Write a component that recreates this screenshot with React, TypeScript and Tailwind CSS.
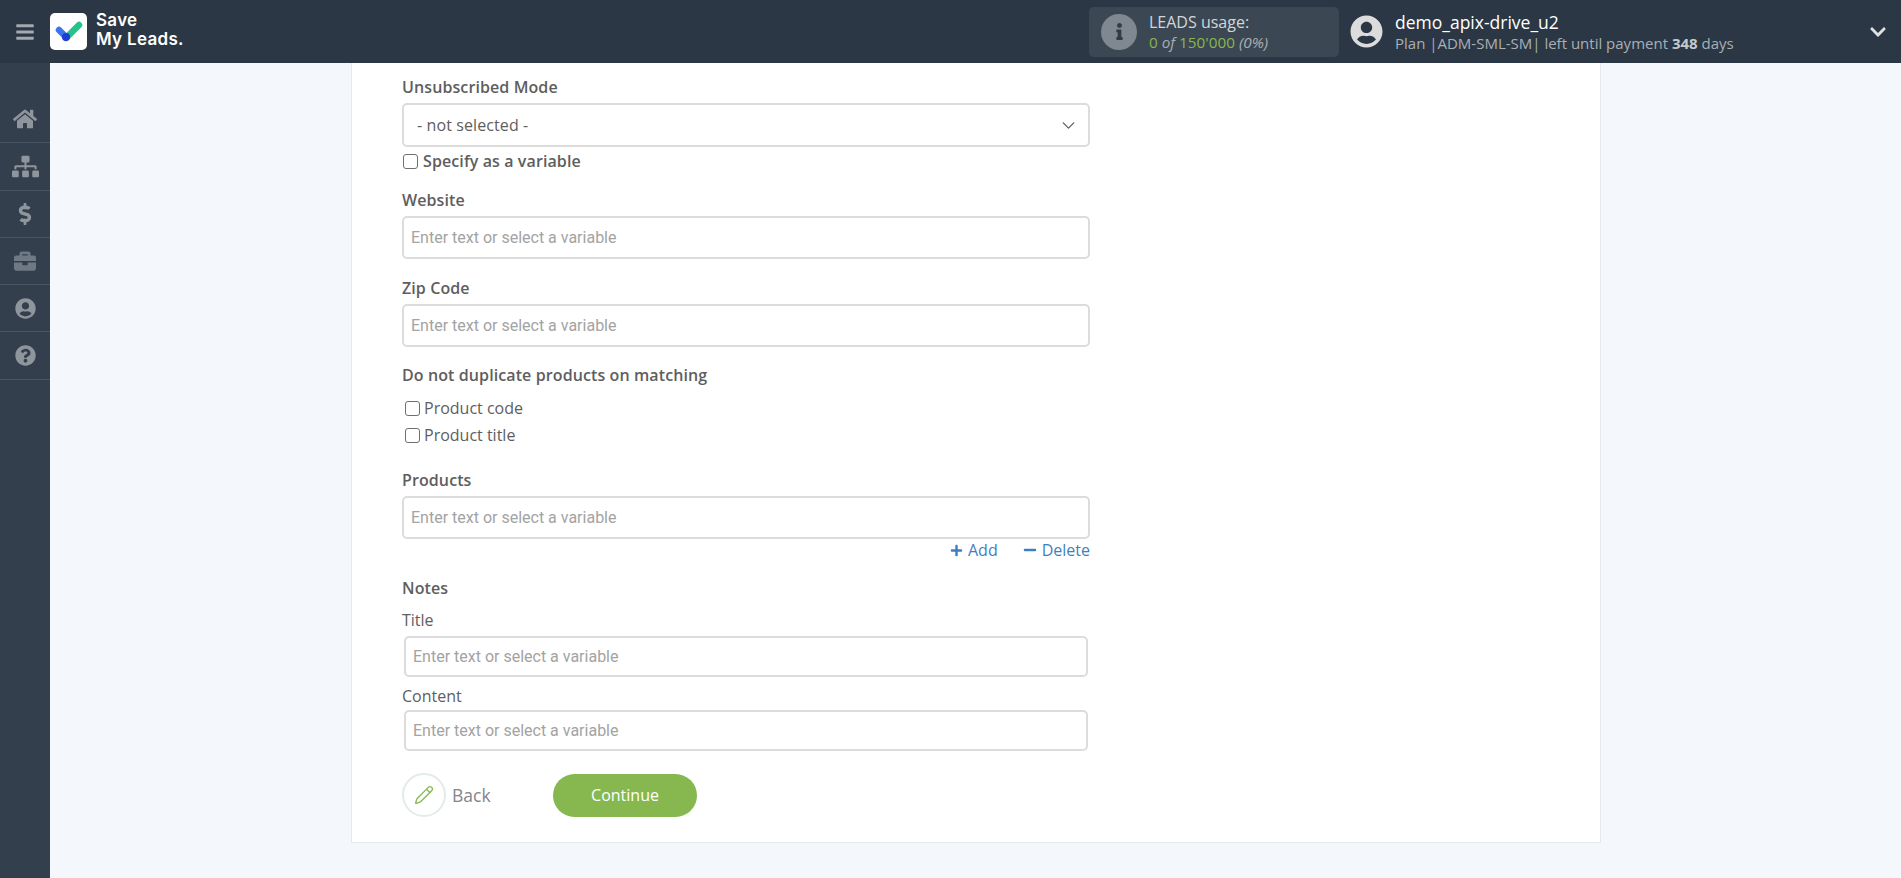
import { ReactNode } from 'react';
import {
  FaBars,
  FaBriefcase,
  FaChevronDown,
  FaDollarSign,
  FaHome,
  FaInfo,
  FaMinus,
  FaPlus,
  FaQuestionCircle,
  FaSitemap,
  FaUserCircle,
} from 'react-icons/fa';
import { ChevronDown, Pencil } from 'lucide-react';

const openSans = "font-['Open_Sans',sans-serif]";

const navItems = [
  { icon: FaHome, size: 24, color: 'text-[#8f959c]' },
  { icon: FaSitemap, size: 27, color: 'text-[#8f959c]' },
  { icon: FaDollarSign, size: 22, color: 'text-[#8f959c]' },
  { icon: FaBriefcase, size: 22, color: 'text-[#6f7984]' },
  { icon: FaUserCircle, size: 21, color: 'text-[#8f959c]' },
  { icon: FaQuestionCircle, size: 21, color: 'text-[#8f959c]' },
];

const Logo = () => (
  <div className="flex items-center gap-[9px]">
    <div className="flex h-[37px] w-[37px] items-center justify-center rounded-[5px] bg-white">
      <svg width="28" height="22" viewBox="0 0 28 22" fill="none">
        <path d="M11 17 L24 4" stroke="#22c48a" strokeWidth="6.5" strokeLinecap="round" />
        <path d="M4 9 L11 16" stroke="#3b74f0" strokeWidth="6.5" strokeLinecap="round" />
        <circle cx="11" cy="16" r="4" fill="#1d3fd1" />
      </svg>
    </div>
    <div className="-mt-[3px] font-['Inter',sans-serif] text-[17px] leading-[19px] font-semibold tracking-[0.3px] text-white">
      <div>Save</div>
      <div>My Leads.</div>
    </div>
  </div>
);

const Header = () => (
  <header className={`flex h-[63px] shrink-0 items-center bg-[#2b3744] ${openSans}`}>
    <div className="flex w-[50px] shrink-0 justify-center">
      <FaBars size={20} className="text-[#a4a9af]" />
    </div>
    <Logo />
    <div className="ml-auto flex h-[50px] w-[250px] items-center rounded-[5px] bg-[#3b4853] pl-[12px]">
      <div className="flex h-[36px] w-[36px] items-center justify-center rounded-full bg-[#7f8890]">
        <FaInfo size={17} className="text-[#2f3b47]" />
      </div>
      <div className="ml-[12px]">
        <div className="text-[16px] leading-[20px] text-[#d3d6d9]">LEADS usage:</div>
        <div className="text-[15.3px] leading-[20px] text-[#8ab54e]">
          0 <i className="text-[#a9afb5]">of</i> 150'000 <i className="text-[#a9afb5]">(0%)</i>
        </div>
      </div>
    </div>
    <div className="ml-[11px] flex w-[551px] items-center">
      <div className="flex h-[33px] w-[33px] items-center justify-center">
        <FaUserCircle size={33} className="text-[#dcdcdc]" />
      </div>
      <div className="ml-[12px]">
        <div className="text-[17.5px] leading-[22px] text-white">demo_apix-drive_u2</div>
        <div className="text-[15px] leading-[20px] text-[#a9afb5]">
          Plan |ADM-SML-SM| left until payment <b className="text-[#c5c9cd]">348</b> days
        </div>
      </div>
      <FaChevronDown size={18} className="mr-[14px] ml-auto text-[#dfe1e3]" />
    </div>
  </header>
);

const Sidebar = () => (
  <aside className="w-[50px] shrink-0 bg-[#343f4e] pt-[33px]">
    {navItems.map((item, i) => {
      const Icon = item.icon;
      return (
        <div key={i} className="flex h-[47.3px] items-center justify-center border-b border-[#4a5562]">
          <Icon size={item.size} className={item.color} />
        </div>
      );
    })}
  </aside>
);

const Label = ({ children, className = '' }: { children: ReactNode; className?: string }) => (
  <div className={`text-[16px] leading-[20px] font-semibold tracking-[0.1px] text-[#5e5e5e] ${className}`}>{children}</div>
);

const TextInput = ({ className = 'h-[43px]' }: { className?: string }) => (
  <div
    className={`flex items-center rounded-[5px] border-2 border-[#dcdcdc] bg-white pl-[7px] font-['Roboto',sans-serif] text-[16px] text-[#a3a3a3] ${className}`}
  >
    Enter text or select a variable
  </div>
);

const Check = ({ label, bold }: { label: string; bold?: boolean }) => (
  <div className="flex items-center">
    <span className="h-[15px] w-[15px] rounded-[3px] border-[1.5px] border-[#6f6f6f] bg-white" />
    <span
      className={`text-[16px] leading-[20px] text-[#5e5e5e] ${bold ? 'ml-[5px] font-semibold tracking-[0.1px]' : 'ml-[4px]'}`}
    >
      {label}
    </span>
  </div>
);

const Form = () => (
  <section className={`h-[780px] w-[1250px] border-x border-b border-[#e6e8ec] bg-white pt-[14px] pl-[50px] ${openSans}`}>
    <div className="w-[688px]">
      <Label>Unsubscribed Mode</Label>
      <div className="mt-[6px] flex h-[44px] items-center justify-between rounded-[5px] border-2 border-[#dcdcdc] pr-[9px] pl-[13px] text-[16px] tracking-[0.1px] text-[#5e5e5e]">
        - not selected -
        <ChevronDown size={21} strokeWidth={1.5} className="text-[#5e5e5e]" />
      </div>
      <div className="mt-[4px] ml-[1px]">
        <Check label="Specify as a variable" bold />
      </div>

      <Label className="mt-[19px]">Website</Label>
      <TextInput className="mt-[6px] h-[43px]" />

      <Label className="mt-[19px]">Zip Code</Label>
      <TextInput className="mt-[6px] h-[43px]" />

      <Label className="mt-[18px]">Do not duplicate products on matching</Label>
      <div className="mt-[13px] ml-[3px] flex flex-col gap-[7px]">
        <Check label="Product code" />
        <Check label="Product title" />
      </div>

      <Label className="mt-[25px]">Products</Label>
      <TextInput className="mt-[6px] h-[43px]" />
      <div className="mt-[1px] flex h-[20px] justify-end gap-[25px] text-[16px] leading-[20px] text-[#3f7fbf]">
        <span className="flex items-center gap-[5px]">
          <FaPlus size={13} /> Add
        </span>
        <span className="flex items-center gap-[5px]">
          <FaMinus size={14} /> Delete
        </span>
      </div>

      <Label className="mt-[18px]">Notes</Label>
      <div className="mt-[12px] text-[16px] leading-[20px] text-[#5e5e5e]">Title</div>
      <TextInput className="mx-[2px] mt-[6px] h-[41px]" />
      <div className="mt-[9px] text-[16px] leading-[20px] text-[#5e5e5e]">Content</div>
      <TextInput className="mx-[2px] mt-[4px] h-[41px]" />

      <div className="mt-[22px] flex items-center">
        <div className="flex h-[44px] w-[44px] items-center justify-center rounded-full border-2 border-[#e3ebe8]">
          <Pencil size={20} strokeWidth={1.6} className="text-[#86b84f]" />
        </div>
        <span className="ml-[6px] w-[101px] text-[17.5px] text-[#84848f]">Back</span>
        <div className="flex h-[43px] w-[144px] items-center justify-center rounded-full bg-[#86b84f] text-[16px] text-white">
          Continue
        </div>
      </div>
    </div>
  </section>
);

export default function App() {
  return (
    <div className="flex h-[878px] flex-col overflow-hidden bg-[#f4f7fc]">
      <Header />
      <div className="flex min-h-0 flex-1">
        <Sidebar />
        <main className="pl-[301px]">
          <Form />
        </main>
      </div>
    </div>
  );
}
